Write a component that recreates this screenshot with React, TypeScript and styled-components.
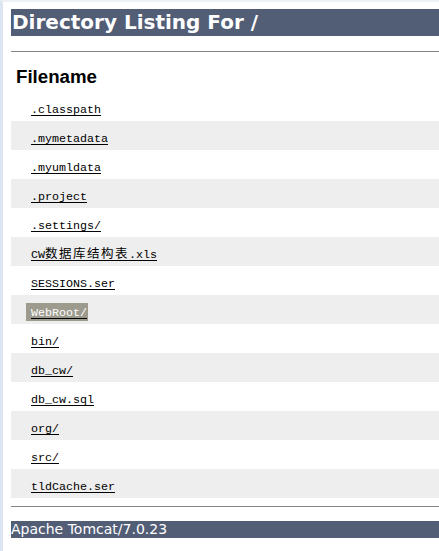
import React from 'react';
import styled, { createGlobalStyle } from 'styled-components';

const GlobalStyle = createGlobalStyle`
  html, body {
    margin: 0;
    padding: 0;
    background: #ffffff;
  }
  body {
    font-family: "DejaVu Sans", sans-serif;
  }
`;

const Page = styled.div`
  min-height: 100vh;
  box-sizing: border-box;
  border-left: 3px solid #dbe5f2;
  border-top: 2px solid #eef1f5;
  padding: 7px 0 0 8px;
`;

const Heading = styled.h1`
  margin: 0;
  height: 27px;
  line-height: 27px;
  padding-left: 1px;
  background: #525d76;
  color: #ffffff;
  font-family: "DejaVu Sans", sans-serif;
  font-weight: bold;
  font-size: 20px;
`;

const Rule = styled.div<{ $gap: number }>`
  margin-top: ${(p) => p.$gap}px;
  height: 1px;
  background: #858585;
`;

const Listing = styled.div`
  display: flex;
  flex-direction: column;
`;

const HeaderCell = styled.div`
  padding: 14px 0 4px 5px;
  line-height: 22px;
  font-family: "Liberation Sans", Arial, sans-serif;
  font-weight: bold;
  font-size: 18.7px;
  color: #000000;
`;

const Row = styled.div<{ $shaded: boolean }>`
  height: 29px;
  box-sizing: border-box;
  padding: 8px 0 0 20px;
  line-height: 16px;
  background: ${(p) => (p.$shaded ? '#eeeeee' : '#ffffff')};
`;

const FileLink = styled.a<{ $active?: boolean }>`
  font-family: "Liberation Mono", "Noto Sans CJK SC", monospace;
  font-size: 11.67px;
  color: ${(p) => (p.$active ? '#ffffff' : '#000000')};
  text-decoration: underline;
  text-decoration-color: #000000;
  text-underline-offset: 2px;
  ${(p) =>
    p.$active &&
    `
    background: #9d9b8e;
    padding: 3px 1px 1px 5px;
    margin-left: -5px;
  `}
`;

const Cjk = styled.span`
  font-family: "Noto Sans CJK SC", sans-serif;
  font-size: 12.5px;
  line-height: 16px;
  letter-spacing: 1.5px;
`;

const Footer = styled.h3`
  margin: 14px 0 0 0;
  height: 17px;
  line-height: 17px;
  background: #525d76;
  color: #ffffff;
  font-family: "DejaVu Sans", sans-serif;
  font-weight: normal;
  font-size: 14px;
`;

type Entry = { name: string; cjk?: [string, string, string] };

const files: Entry[] = [
  { name: '.classpath' },
  { name: '.mymetadata' },
  { name: '.myumldata' },
  { name: '.project' },
  { name: '.settings/' },
  { name: 'CW数据库结构表.xls', cjk: ['CW', '数据库结构表', '.xls'] },
  { name: 'SESSIONS.ser' },
  { name: 'WebRoot/' },
  { name: 'bin/' },
  { name: 'db_cw/' },
  { name: 'db_cw.sql' },
  { name: 'org/' },
  { name: 'src/' },
  { name: 'tldCache.ser' },
];

export default function App() {
  return (
    <>
      <GlobalStyle />
      <Page>
        <Heading>Directory Listing For /</Heading>
        <Rule $gap={15} />
        <Listing>
          <HeaderCell>Filename</HeaderCell>
          {files.map((f, i) => (
            <Row key={f.name} $shaded={i % 2 === 1}>
              <FileLink href="#" $active={f.name === 'WebRoot/'}>
                {f.cjk ? (
                  <>
                    {f.cjk[0]}
                    <Cjk>{f.cjk[1]}</Cjk>
                    {f.cjk[2]}
                  </>
                ) : (
                  f.name
                )}
              </FileLink>
            </Row>
          ))}
        </Listing>
        <Rule $gap={8} />
        <Footer>Apache Tomcat/7.0.23</Footer>
      </Page>
    </>
  );
}
